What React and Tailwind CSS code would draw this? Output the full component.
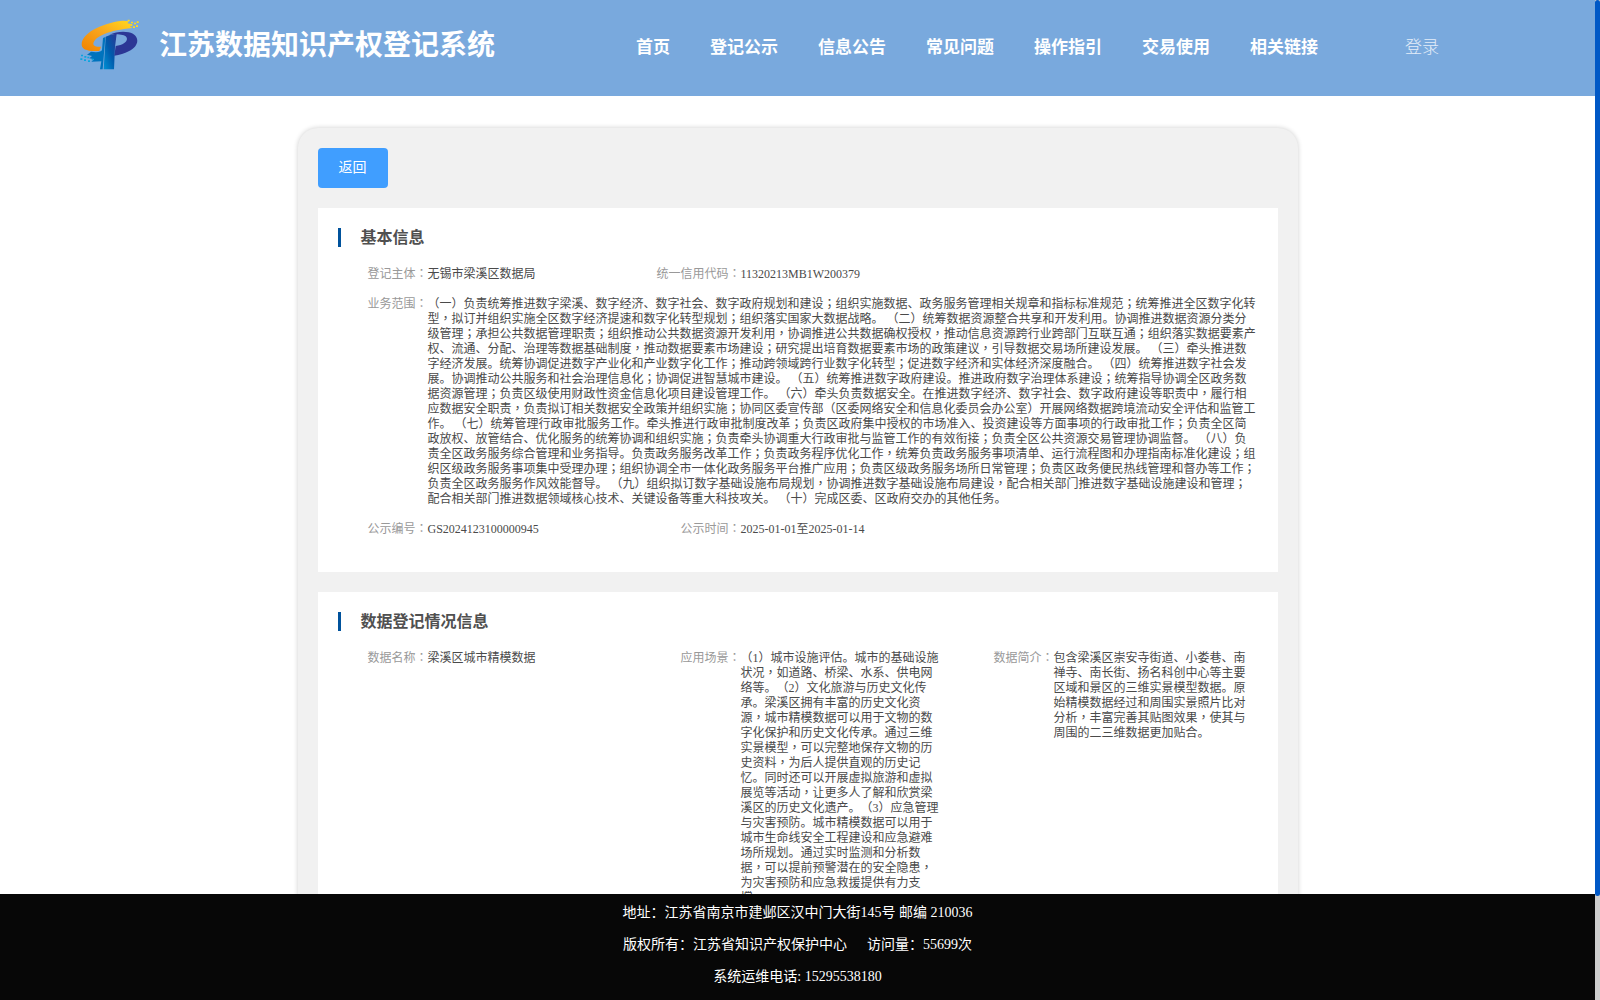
import React from "react";

const navItems = ["首页", "登记公示", "信息公告", "常见问题", "操作指引", "交易使用", "相关链接"];

const scopeLines = [
  "（一）负责统筹推进数字梁溪、数字经济、数字社会、数字政府规划和建设；组织实施数据、政务服务管理相关规章和指标标准规范；统筹推进全区数字化转",
  "型，拟订并组织实施全区数字经济提速和数字化转型规划；组织落实国家大数据战略。 （二）统筹数据资源整合共享和开发利用。协调推进数据资源分类分",
  "级管理；承担公共数据管理职责；组织推动公共数据资源开发利用，协调推进公共数据确权授权，推动信息资源跨行业跨部门互联互通；组织落实数据要素产",
  "权、流通、分配、治理等数据基础制度，推动数据要素市场建设；研究提出培育数据要素市场的政策建议，引导数据交易场所建设发展。 （三）牵头推进数",
  "字经济发展。统筹协调促进数字产业化和产业数字化工作；推动跨领域跨行业数字化转型；促进数字经济和实体经济深度融合。 （四）统筹推进数字社会发",
  "展。协调推动公共服务和社会治理信息化；协调促进智慧城市建设。 （五）统筹推进数字政府建设。推进政府数字治理体系建设；统筹指导协调全区政务数",
  "据资源管理；负责区级使用财政性资金信息化项目建设管理工作。 （六）牵头负责数据安全。在推进数字经济、数字社会、数字政府建设等职责中，履行相",
  "应数据安全职责，负责拟订相关数据安全政策并组织实施；协同区委宣传部（区委网络安全和信息化委员会办公室）开展网络数据跨境流动安全评估和监管工",
  "作。 （七）统筹管理行政审批服务工作。牵头推进行政审批制度改革；负责区政府集中授权的市场准入、投资建设等方面事项的行政审批工作；负责全区简",
  "政放权、放管结合、优化服务的统筹协调和组织实施；负责牵头协调重大行政审批与监管工作的有效衔接；负责全区公共资源交易管理协调监督。 （八）负",
  "责全区政务服务综合管理和业务指导。负责政务服务改革工作；负责政务程序优化工作，统筹负责政务服务事项清单、运行流程图和办理指南标准化建设；组",
  "织区级政务服务事项集中受理办理；组织协调全市一体化政务服务平台推广应用；负责区级政务服务场所日常管理；负责区政务便民热线管理和督办等工作；",
  "负责全区政务服务作风效能督导。 （九）组织拟订数字基础设施布局规划，协调推进数字基础设施布局建设，配合相关部门推进数字基础设施建设和管理；",
  "配合相关部门推进数据领域核心技术、关键设备等重大科技攻关。 （十）完成区委、区政府交办的其他任务。",
];

const sceneLines = [
  "（1）城市设施评估。城市的基础设施",
  "状况，如道路、桥梁、水系、供电网",
  "络等。（2）文化旅游与历史文化传",
  "承。梁溪区拥有丰富的历史文化资",
  "源，城市精模数据可以用于文物的数",
  "字化保护和历史文化传承。通过三维",
  "实景模型，可以完整地保存文物的历",
  "史资料，为后人提供直观的历史记",
  "忆。同时还可以开展虚拟旅游和虚拟",
  "展览等活动，让更多人了解和欣赏梁",
  "溪区的历史文化遗产。（3）应急管理",
  "与灾害预防。城市精模数据可以用于",
  "城市生命线安全工程建设和应急避难",
  "场所规划。通过实时监测和分析数",
  "据，可以提前预警潜在的安全隐患，",
  "为灾害预防和应急救援提供有力支",
  "撑。",
];

const introLines = [
  "包含梁溪区崇安寺街道、小娄巷、南",
  "禅寺、南长街、扬名科创中心等主要",
  "区域和景区的三维实景模型数据。原",
  "始精模数据经过和周围实景照片比对",
  "分析，丰富完善其贴图效果，使其与",
  "周围的二三维数据更加贴合。",
];

// centred form of ，；：
function Text({ children }) {
  return children.split(/([，；：])/).map((part, i) =>
    i % 2 ? (
      <span key={i} className="font-['Noto_Sans_CJK_TC',sans-serif] leading-[0]">{part}</span>
    ) : (
      part
    )
  );
}

function Field({ label, lines, className }) {
  return (
    <div className={"flex text-xs leading-[15px] " + className}>
      <div className="-ml-4 w-24 shrink-0 text-right text-[#999]">
        <Text>{label + "："}</Text>
      </div>
      <div className="whitespace-pre text-[#4a4a4a]">
        {lines.map((line, i) => (
          <div key={i} className="h-[15px]">
            <Text>{line}</Text>
          </div>
        ))}
      </div>
    </div>
  );
}

function Section({ title, className, children }) {
  return (
    <section className={"mt-5 bg-white px-5 pt-5 " + className}>
      <h2 className="flex h-[19px] items-center border-l-3 border-[#00529c] pl-5 text-base font-bold text-[#505050]">
        {title}
      </h2>
      <div className="mt-5 flex flex-col gap-[15px] pl-2.5">{children}</div>
    </section>
  );
}

function Logo() {
  return (
    <svg className="mb-1.5 h-[54px] w-[60px]" viewBox="60 55 180 162">
      <defs>
        <linearGradient id="gold" x1="0" y1="1" x2="1" y2="0">
          <stop offset="0" stopColor="#f08200" />
          <stop offset="0.5" stopColor="#f8a41c" />
          <stop offset="1" stopColor="#ffd91e" />
        </linearGradient>
        <linearGradient id="stem" x1="0" y1="1" x2="1" y2="0">
          <stop offset="0" stopColor="#0090d4" />
          <stop offset="0.5" stopColor="#005bac" />
          <stop offset="1" stopColor="#2c3795" />
        </linearGradient>
      </defs>
      <path fill="url(#gold)" d="M190 63C140 67 66 95 65 134c0 16 17 22 53 20l5-13c-17 2-26-3-22-13 8-19 45-36 116-43l-8-6 8-5-15-3 5-6z" />
      <path fill="#ffd91e" d="M203 60h6v5h-6zM213 66h6v5h-6zM222 69h6v5h-6zM230 65h6v5h-6zM211 74h6v5h-6zM219 80h6v5h-6zM228 77h6v5h-6z" />
      <path fill="url(#stem)" d="M137 111c10-5 20-8 33-9l-5 40-3 67h-31z" />
      <path fill="#2c3795" d="M148 105c18-8 40-11 58-7 35 8 34 41 0 57-12 6-27 11-43 13l4-29c26-4 39-17 32-27-6-8-27-10-51-7z" />
      <path fill="#0073bd" d="M129 115l7-3-8 97h-8l4-24-30 1 8-7-14-3 8-7-15-4 12-9c18 3 30 1 33-5z" />
      <path fill="#0aa5df" d="M63 165h6v5h-6zM73 169h6v5h-6zM61 176h6v5h-6zM82 171h6v5h-6zM72 179h6v5h-6zM84 182h6v5h-6zM95 177h6v5h-6z" />
    </svg>
  );
}

export default function App() {
  return (
    <div className="flex h-[1000px] w-[1600px] overflow-hidden bg-white font-['Liberation_Serif','Noto_Sans_CJK_SC',serif] [text-spacing-trim:space-all]">
      <div className="flex w-[1595px] flex-col">
        <header className="flex h-24 shrink-0 items-center bg-[#79a9dd] pl-20 text-white">
          <Logo />
          <h1 className="ml-[19px] w-[477px] pb-1 text-[28px] leading-10 font-bold">江苏数据知识产权登记系统</h1>
          <nav className="flex gap-10 text-[17px] leading-6 font-bold">
            {navItems.map((item) => (
              <a key={item}>{item}</a>
            ))}
          </nav>
          <a className="ml-[87px] text-[17px] leading-6 font-light text-white/80">登录</a>
        </header>

        <main className="min-h-0 flex-1 overflow-hidden pt-8">
          <div className="mx-auto h-[1400px] w-[1000px] rounded-[20px] bg-[#f1f1f1] p-5 shadow-[0_0_5px_rgba(0,0,0,0.2)]">
            <button className="block h-10 w-[70px] rounded bg-[#409eff] text-sm text-white">返回</button>

            <Section title="基本信息" className="h-[364px]">
              <div className="flex">
                <Field label="登记主体" lines={["无锡市梁溪区数据局"]} className="w-[313px]" />
                <Field label="统一信用代码" lines={["11320213MB1W200379"]} className="w-[313px]" />
              </div>
              <Field label="业务范围" lines={scopeLines} className="" />
              <div className="flex">
                <Field label="公示编号" lines={["GS2024123100000945"]} className="w-[313px]" />
                <Field label="公示时间" lines={["2025-01-01至2025-01-14"]} className="w-[313px]" />
              </div>
            </Section>

            <Section title="数据登记情况信息" className="h-[700px]">
              <div className="flex">
                <Field label="数据名称" lines={["梁溪区城市精模数据"]} className="w-[313px]" />
                <Field label="应用场景" lines={sceneLines} className="w-[313px]" />
                <Field label="数据简介" lines={introLines} className="w-[280px]" />
              </div>
            </Section>
          </div>
        </main>

        <footer className="h-[106px] shrink-0 bg-[#070707] pt-[3px] text-center text-sm leading-8 whitespace-pre text-white">
          <p>地址：江苏省南京市建邺区汉中门大街145号 邮编 210036</p>
          <p>
            版权所有：江苏省知识产权保护中心<span className="ml-5">访问量：</span>55699次
          </p>
          <p>系统运维电话: 15295538180</p>
        </footer>
      </div>
      {/* scrollbar */}
      <div className="w-[5px] bg-[#cdcdcd]">
        <div className="h-[896px] rounded-full bg-[#0058c6]" />
      </div>
    </div>
  );
}
